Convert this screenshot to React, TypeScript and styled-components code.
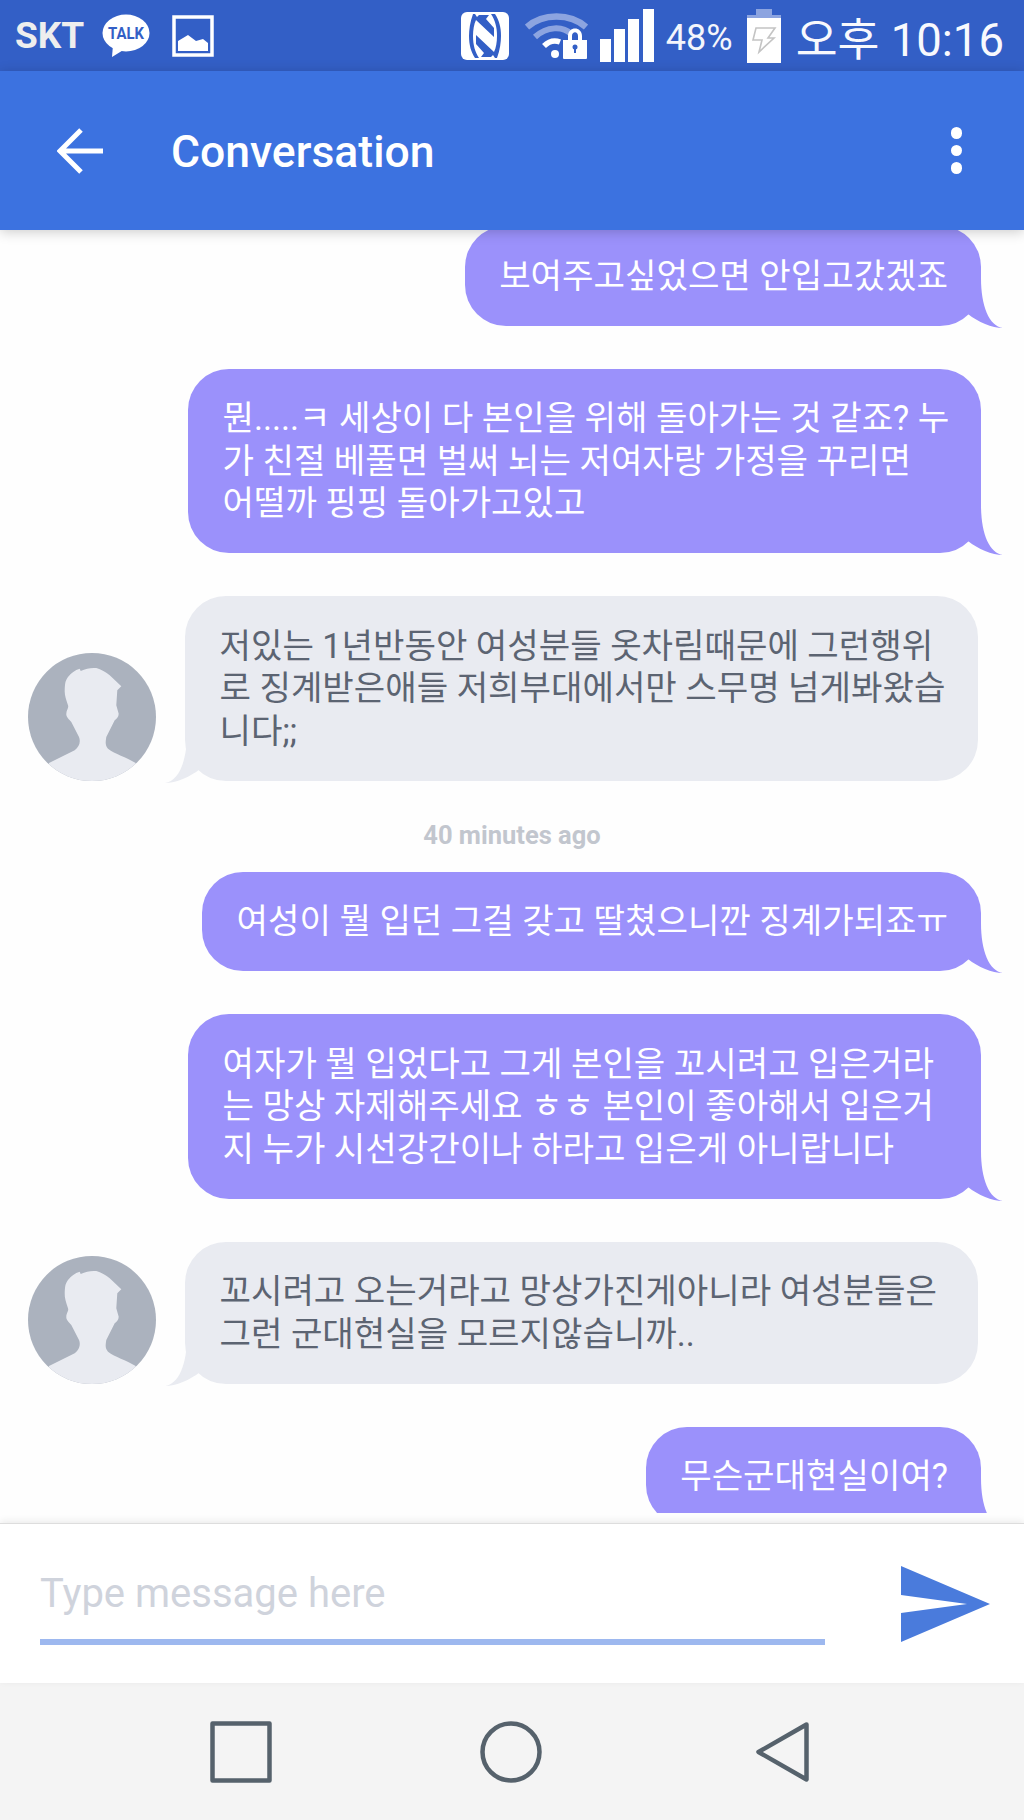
import React from 'react';
import styled, { createGlobalStyle } from 'styled-components';

const GlobalStyle = createGlobalStyle`
    html, body {
        margin: 0;
        padding: 0;
        background: #fefefe;
    }
    * {
        box-sizing: border-box;
    }
`;

const FONT = `Roboto, "Noto Sans CJK KR", sans-serif`;

const Screen = styled.div`
    width: 1024px;
    height: 1820px;
    display: flex;
    flex-direction: column;
    overflow: hidden;
    position: relative;
    font-family: ${FONT};
    background: #fefefe;
`;

const StatusBar = styled.div`
    height: 71px;
    flex: none;
    display: flex;
    align-items: center;
    padding: 0 20px 0 15px;
    background: #335fc6;
    color: #fff;
`;

const Carrier = styled.span`
    font-size: 37px;
    font-weight: 700;
    color: #eeeeee;
    margin-right: 18px;
`;

const StatusIcon = styled.svg<{ $gap?: number }>`
    display: block;
    flex: none;
    margin-right: ${(p) => p.$gap ?? 0}px;
`;

const Spacer = styled.div`
    flex: 1;
`;

const Percent = styled.span`
    font-size: 36px;
    margin: 4px 14px 0 12px;
    color: #f4f6fc;
`;

const Clock = styled.span`
    font-size: 45.5px;
    margin-left: 15px;
    color: #f8f9fd;
    white-space: nowrap;
`;

const Toolbar = styled.header`
    height: 159px;
    flex: none;
    display: flex;
    align-items: center;
    padding: 0 62px 0 57px;
    background: #3c72e0;
    color: #fff;
    position: relative;
    z-index: 2;
    box-shadow: 0 2px 12px rgba(0, 0, 0, 0.2);
`;

const Title = styled.h1`
    flex: 1;
    margin: 3px 0 0 68px;
    font-size: 44.5px;
    font-weight: 500;
    line-height: 50px;
`;

const Dots = styled.div`
    display: flex;
    flex-direction: column;
    gap: 6px;
`;

const Dot = styled.span`
    width: 11.5px;
    height: 11.5px;
    border-radius: 50%;
    background: #fff;
`;

const Thread = styled.main`
    height: 1283px;
    flex: none;
    overflow: hidden;
`;

const ThreadInner = styled.div`
    margin-top: -4px;
    display: flex;
    flex-direction: column;
    gap: 43px;
`;

const Row = styled.div<{ $incoming?: boolean }>`
    display: flex;
    align-items: flex-end;
    justify-content: ${(p) => (p.$incoming ? 'flex-start' : 'flex-end')};
    padding: ${(p) => (p.$incoming ? '0 0 0 28px' : '0 43px 0 0')};
    gap: 29px;
`;

const Bubble = styled.div<{ $incoming?: boolean; $wide?: boolean }>`
    position: relative;
    width: ${(p) => (p.$wide ? '793px' : 'auto')};
    padding: 28.5px 33px 28.5px 34.5px;
    border-radius: 41px;
    font-size: 34.2px;
    line-height: 42.5px;
    background: ${(p) => (p.$incoming ? '#e9ebf1' : '#9b91fb')};
    color: ${(p) => (p.$incoming ? '#5c6472' : '#ffffff')};
`;

const Line = styled.div`
    white-space: nowrap;
`;

const Tail = styled.svg<{ $incoming?: boolean }>`
    position: absolute;
    bottom: -2px;
    width: 52px;
    height: 50px;
    ${(p) => (p.$incoming ? 'left: -20px; transform: scaleX(-1);' : 'right: -22px;')}
`;

const AvatarImage = styled.svg`
    display: block;
    flex: none;
    width: 128px;
    height: 128px;
    border-radius: 50%;
`;

const TimeLabel = styled.div`
    text-align: center;
    font-size: 25.5px;
    font-weight: 700;
    line-height: 28px;
    color: #c2c6ce;
    margin: -3px 0 -20px;
`;

const InputBar = styled.div`
    margin-top: 10px;
    height: 160px;
    flex: none;
    display: flex;
    align-items: flex-start;
    padding: 0 33px 0 40px;
    background: #fff;
    border-top: 1px solid #dddddd;
    box-shadow: 0 -2px 7px rgba(0, 0, 0, 0.08);
    position: relative;
`;

const MessageInput = styled.input`
    width: 785px;
    height: 121px;
    padding: 30px 0 7px;
    border: none;
    border-bottom: 6px solid #9db8ef;
    outline: none;
    background: transparent;
    font-family: ${FONT};
    font-size: 40px;
    font-weight: 400;
    color: #565e6c;

    &::placeholder {
        color: #cfd3dc;
        opacity: 1;
    }
`;

const SendIcon = styled.svg`
    display: block;
    margin: 42px 0 0 76px;
`;

const NavBar = styled.nav`
    flex: 1;
    display: flex;
    align-items: flex-start;
    padding: 38px 0 0 210px;
    gap: 208px;
    background: #f4f4f4;
`;

const NavIcon = styled.svg`
    display: block;
    flex: none;
    fill: none;
    stroke: #56626c;
    stroke-width: 4.5;
    stroke-linejoin: round;
`;

const Avatar = () => (
    <AvatarImage viewBox="0 0 128 128">
        <rect width="128" height="128" fill="#abb2be" />
        <path
            fill="#e9ebf1"
            d="M21 110 L46.7 97.3 C51 94 53 89 51 84 L43.3 69 C41 66 38 64 38.3 60.7 C38.4 57 41 55 40 52.3 C38 46 36.5 42 36.7 37.3 C37 31 37 28 40 24 C43 20 47 17 51.7 15.7 L52.7 18 C58 15.5 63 14.5 68.3 15 C73 16 78 19.5 81.7 22.3 L93.3 33.3 L89.3 37.3 L88.3 52.3 L90.7 60.7 C90.5 64 89 65.5 86.7 67.3 L78.3 84 C77.5 89 77 92 80 95.7 C87 101 98 104 107.7 110 L107.7 128 L21 128 Z"
        />
    </AvatarImage>
);

const BubbleTail = ({ incoming, color }: { incoming?: boolean; color: string }) => (
    <Tail $incoming={incoming} viewBox="0 0 52 50">
        <path
            fill={color}
            d="M30 0 C30 28 38 48 52 50 C41 50 27 44 17 36 L0 36 L0 0 Z"
        />
    </Tail>
);

const NFC_BAND = 'M12 2 C9 10 8 18 8 24 C8 33 10 40 14 46 L18 46 C14 40 12 33 12 24 C12 18 13 12 15 8 L33 25 L33 16 L25 7 L28 3 L18 3 L16 5 L14 2 Z';

interface Message {
    id: number;
    incoming?: boolean;
    wide?: boolean;
    lines: string[];
    time?: string;
}

const messages: Message[] = [
    { id: 1, lines: ['보여주고싶었으면 안입고갔겠죠'] },
    {
        id: 2,
        wide: true,
        lines: [
            '뭔.....ㅋ 세상이 다 본인을 위해 돌아가는 것 같죠? 누',
            '가 친절 베풀면 벌써 뇌는 저여자랑 가정을 꾸리면',
            '어떨까 핑핑 돌아가고있고',
        ],
    },
    {
        id: 3,
        incoming: true,
        wide: true,
        lines: [
            '저있는 1년반동안 여성분들 옷차림때문에 그런행위',
            '로 징계받은애들 저희부대에서만 스무명 넘게봐왔습',
            '니다;;',
        ],
    },
    { id: 4, time: '40 minutes ago', lines: ['여성이 뭘 입던 그걸 갖고 딸쳤으니깐 징계가되죠ㅠ'] },
    {
        id: 5,
        wide: true,
        lines: [
            '여자가 뭘 입었다고 그게 본인을 꼬시려고 입은거라',
            '는 망상 자제해주세요 ㅎㅎ 본인이 좋아해서 입은거',
            '지 누가 시선강간이나 하라고 입은게 아니랍니다',
        ],
    },
    {
        id: 6,
        incoming: true,
        wide: true,
        lines: ['꼬시려고 오는거라고 망상가진게아니라 여성분들은', '그런 군대현실을 모르지않습니까..'],
    },
    { id: 7, lines: ['무슨군대현실이여?'] },
];

const App = () => {
    return (
        <Screen>
            <GlobalStyle />
            <StatusBar>
                <Carrier>SKT</Carrier>
                <StatusIcon width="48" height="46" viewBox="0 0 48 46" $gap={22}>
                    <ellipse cx="24" cy="20" rx="23.5" ry="18.5" fill="#fff" />
                    <path d="M11 32 L10 44 L23 36 Z" fill="#fff" />
                    <text x="24" y="26" textAnchor="middle" fontFamily="Roboto, sans-serif" fontSize="17" fontWeight="700" textLength="36" lengthAdjust="spacingAndGlyphs" fill="#335fc6">
                        TALK
                    </text>
                </StatusIcon>
                <StatusIcon width="42" height="42" viewBox="0 0 42 42">
                    <rect x="2" y="2" width="38" height="38" fill="none" stroke="#fff" strokeWidth="3.5" />
                    <path d="M6 36 L6 26 L16 20 L24 26 L31 24 L36 28 L36 36 Z" fill="#fff" />
                </StatusIcon>
                <Spacer />
                <StatusIcon width="48" height="48" viewBox="0 0 48 48" $gap={16}>
                    <rect width="48" height="48" rx="6" fill="#fff" />
                    <path d={NFC_BAND} fill="#335fc6" />
                    <path d={NFC_BAND} fill="#335fc6" transform="rotate(180 24 24)" />
                </StatusIcon>
                <StatusIcon width="63" height="48" viewBox="0 0 63 48" $gap={12}>
                    <g fill="none" strokeLinecap="butt">
                        <path d="M2 15 C18 1 45 1 61 15" stroke="#8ca4e0" strokeWidth="6.5" />
                        <path d="M10 25 C22 14 38 14 46 22" stroke="#8ca4e0" strokeWidth="6" />
                        <path d="M19 34 C24 29 30 28 35 30" stroke="#fff" strokeWidth="5.5" />
                    </g>
                    <circle cx="30" cy="42" r="4" fill="#fff" />
                    <path d="M38 28 H62 V46 Q62 47 61 47 H39 Q38 47 38 46 Z" fill="#fff" />
                    <path d="M43 28 V24 C43 14 57 14 57 24 V28 H53 V24 C53 19 47 19 47 24 V28 Z" fill="#fff" />
                    <circle cx="50" cy="35" r="2.5" fill="#335fc6" />
                    <rect x="49" y="35" width="2" height="6" fill="#335fc6" />
                </StatusIcon>
                <StatusIcon width="54" height="54" viewBox="0 0 54 54">
                    <rect x="0" y="30" width="11" height="23" fill="#fff" />
                    <rect x="14" y="20" width="11" height="33" fill="#fff" />
                    <rect x="28" y="10" width="11" height="43" fill="#fff" />
                    <rect x="43" y="0" width="11" height="53" fill="#fff" />
                </StatusIcon>
                <Percent>48%</Percent>
                <StatusIcon width="34" height="54" viewBox="0 0 34 54">
                    <rect x="9" y="0" width="16" height="6" fill="#8ca4e0" />
                    <rect x="0" y="6" width="34" height="8" fill="#8ca4e0" />
                    <rect x="0" y="9" width="34" height="45" fill="#fff" />
                    <path d="M9 19 H28 L21 29 H27 L12 43 L15 31 H6 Z" fill="none" stroke="#c4c4c4" strokeWidth="1.6" />
                </StatusIcon>
                <Clock>오후 10:16</Clock>
            </StatusBar>
            <Toolbar>
                <svg width="46" height="46" viewBox="0 0 46 46" fill="none" stroke="#fff" strokeWidth="5">
                    <path d="M46 23 H3 M24 2 L3 23 L24 44" />
                </svg>
                <Title>Conversation</Title>
                <Dots>
                    <Dot />
                    <Dot />
                    <Dot />
                </Dots>
            </Toolbar>
            <Thread>
                <ThreadInner>
                    {messages.map((message) => (
                        <React.Fragment key={message.id}>
                            {message.time && <TimeLabel>{message.time}</TimeLabel>}
                            <Row $incoming={message.incoming}>
                                {message.incoming && <Avatar />}
                                <Bubble $incoming={message.incoming} $wide={message.wide}>
                                    {message.lines.map((line) => (
                                        <Line key={line}>{line}</Line>
                                    ))}
                                    <BubbleTail
                                        incoming={message.incoming}
                                        color={message.incoming ? '#e9ebf1' : '#9b91fb'}
                                    />
                                </Bubble>
                            </Row>
                        </React.Fragment>
                    ))}
                </ThreadInner>
            </Thread>
            <InputBar>
                <MessageInput placeholder="Type message here" readOnly />
                <SendIcon width="90" height="76" viewBox="0 0 90 76">
                    <path d="M0 0 L89 38 L0 76 L0 47 L66 38 L0 29 Z" fill="#4a7bdc" />
                </SendIcon>
            </InputBar>
            <NavBar>
                <NavIcon width="62" height="62" viewBox="0 0 62 62">
                    <rect x="2.5" y="2.5" width="57" height="57" />
                </NavIcon>
                <NavIcon width="62" height="62" viewBox="0 0 62 62">
                    <circle cx="31" cy="31" r="28.5" />
                </NavIcon>
                <NavIcon width="62" height="62" viewBox="0 0 62 62">
                    <path d="M56.5 3.5 L8.5 31 L56.5 58.5 Z" />
                </NavIcon>
            </NavBar>
        </Screen>
    );
};

export default App;
